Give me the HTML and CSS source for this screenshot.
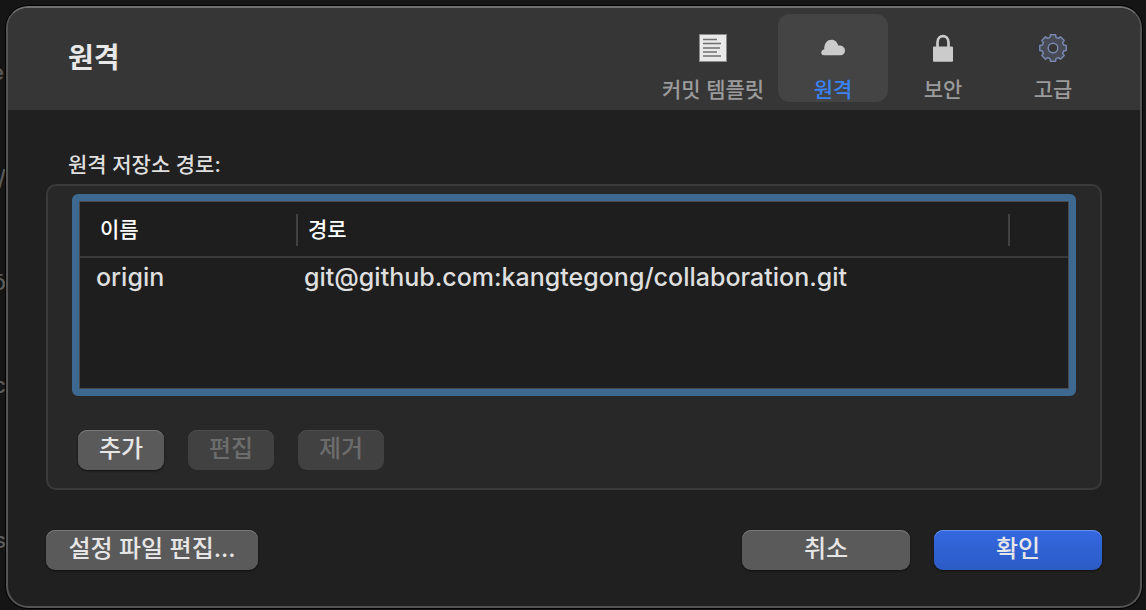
FILE: index.html
```html
<!DOCTYPE html>
<html lang="ko">
<head>
<meta charset="utf-8">
<title>원격</title>
<meta name="viewport" content="width=device-width, initial-scale=1">
<link rel="stylesheet" href="styles.css">
</head>
<body>
<div class="backdrop" aria-hidden="true">
  <span class="behind behind-1">e(</span>
  <span class="behind behind-2">/</span>
  <span class="behind behind-3">ō</span>
  <span class="behind behind-4">c</span>
  <span class="behind behind-5">s</span>
</div>
<main class="dialog">
  <header class="toolbar">
    <h1 class="title">원격</h1>
    <nav class="tabs">
      <button class="tab tab-wide" type="button">
        <svg class="icon" viewBox="0 0 28 28" aria-hidden="true">
          <rect x="0.5" y="0.5" width="27" height="27" fill="#e9e9e9" stroke="#8c8c8c"/>
          <path d="M4 5.5h14M4 9.5h18M4 14h17M4 18h14M4 22h18" stroke="#707070" stroke-width="1.4"/>
        </svg>
        <span>커밋 템플릿</span>
      </button>
      <button class="tab tab-active" type="button" aria-current="page">
        <svg class="icon" viewBox="0 0 28 28" aria-hidden="true">
          <path d="M5 21.3C1.2 21.3 1.5 15.7 5.2 15.2C5.1 9 8.5 5.7 12.6 5.7C16 5.7 18.3 8 19.2 11.5C23 10.8 26 13.2 26 16.5C26 19.5 24 21.3 21.2 21.3Z" fill="#cbcbcb"/>
        </svg>
        <span>원격</span>
      </button>
      <button class="tab" type="button">
        <svg class="icon" viewBox="0 0 28 28" aria-hidden="true">
          <path d="M8.5 14V8.5C8.5 0 19.5 0 19.5 8.5V14" fill="none" stroke="#cbcbcb" stroke-width="2.7"/>
          <rect x="4" y="12.5" width="20" height="15.3" rx="1" fill="#cbcbcb"/>
        </svg>
        <span>보안</span>
      </button>
      <button class="tab" type="button">
        <svg class="icon" viewBox="-14 -14 28 28" aria-hidden="true">
          <path d="M-3-10.6L-2.6-13.2H2.6L3-10.6L5.4-9.6L7.5-11.2L11.2-7.5L9.6-5.4L10.6-3L13.2-2.6V2.6L10.6 3L9.6 5.4L11.2 7.5L7.5 11.2L5.4 9.6L3 10.6L2.6 13.2H-2.6L-3 10.6L-5.4 9.6L-7.5 11.2L-11.2 7.5L-9.6 5.4L-10.6 3L-13.2 2.6V-2.6L-10.6-3L-9.6-5.4L-11.2-7.5L-7.5-11.2L-5.4-9.6Z" fill="#484b54" stroke="#7888b2" stroke-width="1.5" stroke-linejoin="round"/>
          <circle r="4.8" fill="#363636" stroke="#7888b2" stroke-width="1.5"/>
        </svg>
        <span>고급</span>
      </button>
    </nav>
  </header>
  <div class="content">
    <h2 class="label" id="paths-label">원격 저장소 경로:</h2>
    <section class="group" aria-labelledby="paths-label">
      <div class="list" tabindex="0">
        <table class="remotes">
          <colgroup><col class="col-name"><col><col class="col-end"></colgroup>
          <thead>
            <tr>
              <th scope="col"><span class="head head-first">이름</span></th>
              <th scope="col"><span class="head">경로</span></th>
              <td><span class="head"></span></td>
            </tr>
          </thead>
          <tbody>
            <tr>
              <td>origin</td>
              <td colspan="2">git@github.com:kangtegong/collaboration.git</td>
            </tr>
          </tbody>
        </table>
      </div>
      <div class="actions">
        <button class="button" type="button">추가</button>
        <button class="button" type="button" disabled>편집</button>
        <button class="button" type="button" disabled>제거</button>
      </div>
    </section>
    <footer class="footer">
      <button class="button button-config" type="button">설정 파일 편집...</button>
      <button class="button button-wide" type="button">취소</button>
      <button class="button button-wide button-primary" type="button">확인</button>
    </footer>
  </div>
</main>
</body>
</html>
```
FILE: styles.css
```css
* {
  box-sizing: border-box;
}

body {
  margin: 0;
  min-height: 100vh;
  padding: 6px 4px 2px 6px;
  display: flex;
  background: #151515;
  color: #dfdfdf;
  font-family: Inter, "Noto Sans CJK KR", sans-serif;
  font-size: 21px;
  font-weight: 500;
}

button {
  font: inherit;
  border: 0;
  margin: 0;
}

/* Slivers of the window that the dialog covers */
.backdrop {
  position: absolute;
  top: 0;
  bottom: 0;
  left: 0;
  width: 6px;
  overflow: hidden;
  color: #5c5c5c;
  font-size: 22px;
  line-height: 24px;
}

.behind {
  position: absolute;
  right: 0;
}

.behind-1 { top: 60px; right: -6px; }
.behind-2 { top: 166px; }
.behind-3 { top: 270px; }
.behind-4 { top: 373px; }
.behind-5 { top: 528px; }

.dialog {
  position: relative;
  flex: 1;
  min-width: 0;
  display: flex;
  flex-direction: column;
  overflow: hidden;
  border: 2px solid #545454;
  border-top-color: #707070;
  border-radius: 22px;
  background: #202020;
  box-shadow: 0 0 0 1px #000;
}

.toolbar {
  display: flex;
  justify-content: space-between;
  padding: 6px 32px 8px 60px;
  background: #363636;
}

.title {
  margin: 0;
  padding-top: 24px;
  color: #e8e8e8;
  font-size: 28px;
  font-weight: 700;
  line-height: 40px;
}

.tabs {
  display: flex;
}

.tab {
  width: 110px;
  height: 88px;
  padding: 20px 0 0;
  display: flex;
  flex-direction: column;
  align-items: center;
  gap: 14px;
  border-radius: 12px;
  background: transparent;
  color: #9b9b9b;
  line-height: 28px;
  white-space: nowrap;
}

.tab-wide {
  width: 130px;
}

.tab-active {
  background: #444;
  color: #3b82f6;
}

.icon {
  display: block;
  flex: none;
  width: 28px;
  height: 28px;
}

.content {
  flex: 1;
  display: flex;
  flex-direction: column;
  padding: 40px 38px 36px;
}

.label {
  margin: 0 0 4px 22px;
  font-size: 21px;
  font-weight: 500;
  line-height: 30px;
}

.group {
  flex: 1;
  display: flex;
  flex-direction: column;
  padding: 8px 24px 18px;
  border: 2px solid #3a3a3a;
  border-radius: 10px;
  background: #282828;
}

.list {
  flex: 1;
  border: 7px solid #3d6990;
  border-radius: 6px;
  background: #1e1e1e;
  box-shadow: inset 0 0 0 1px #4a4a4a;
  padding: 1px;
  outline: 0;
}

.remotes {
  width: 100%;
  table-layout: fixed;
  border-collapse: collapse;
}

.col-name {
  width: 216px;
}

.col-end {
  width: 60px;
}

.remotes thead tr {
  border-bottom: 2px solid #3a3a3a;
}

.remotes th,
.remotes thead td {
  padding: 12px 0 10px;
  text-align: left;
}

.head {
  display: block;
  height: 32px;
  padding-left: 10px;
  border-left: 2px solid #424242;
  color: #fff;
  font-weight: 500;
  line-height: 32px;
}

.head-first {
  padding-left: 18px;
  border-left-color: transparent;
}

.remotes tbody td {
  padding: 0 0 0 8px;
  font-size: 25px;
  line-height: 38px;
  white-space: nowrap;
}

.remotes tbody td:first-child {
  padding-left: 16px;
}

.actions {
  display: flex;
  gap: 24px;
  padding: 34px 6px 0;
}

.button {
  min-width: 86px;
  height: 40px;
  padding: 0 18px 2px;
  border-radius: 9px;
  background: #5a5a5a;
  box-shadow: inset 0 1px #7a7a7a, 0 1px 2px #111;
  color: #e6e6e6;
  font-size: 24px;
  line-height: 36px;
  white-space: nowrap;
}

.button:disabled {
  background: #414141;
  box-shadow: inset 0 1px #4c4c4c;
  color: #6c6c6c;
}

.footer {
  display: flex;
  gap: 24px;
  margin-top: 40px;
}

.button-config {
  min-width: 212px;
  margin-right: auto;
}

.button-wide {
  min-width: 168px;
}

.button-primary {
  background: linear-gradient(#3468e0, #2c5bc6);
  box-shadow: inset 0 1px #6a90e8, 0 1px 2px #111;
}
```
